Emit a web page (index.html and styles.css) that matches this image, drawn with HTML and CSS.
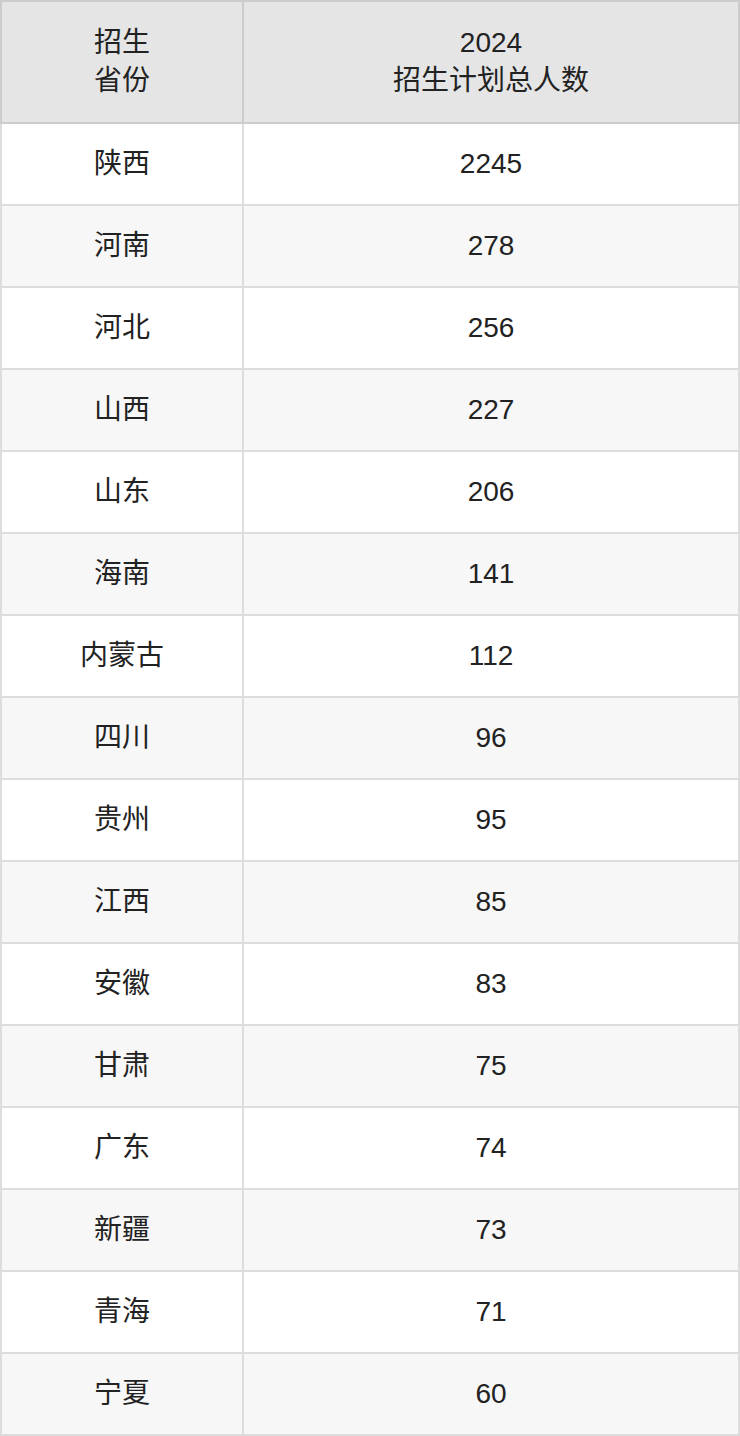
FILE: index.html
```html
<!DOCTYPE html>
<html lang="zh-CN">
<head>
<meta charset="utf-8">
<title>招生计划</title>
<link rel="stylesheet" href="styles.css">
</head>
<body>
<table class="plan">
  <colgroup><col class="c1"><col class="c2"></colgroup>
  <thead>
    <tr><th>招生<br>省份</th><th>2024<br>招生计划总人数</th></tr>
  </thead>
  <tbody>
    <tr><td>陕西</td><td>2245</td></tr>
    <tr><td>河南</td><td>278</td></tr>
    <tr><td>河北</td><td>256</td></tr>
    <tr><td>山西</td><td>227</td></tr>
    <tr><td>山东</td><td>206</td></tr>
    <tr><td>海南</td><td>141</td></tr>
    <tr><td>内蒙古</td><td>112</td></tr>
    <tr><td>四川</td><td>96</td></tr>
    <tr><td>贵州</td><td>95</td></tr>
    <tr><td>江西</td><td>85</td></tr>
    <tr><td>安徽</td><td>83</td></tr>
    <tr><td>甘肃</td><td>75</td></tr>
    <tr><td>广东</td><td>74</td></tr>
    <tr><td>新疆</td><td>73</td></tr>
    <tr><td>青海</td><td>71</td></tr>
    <tr><td>宁夏</td><td>60</td></tr>
  </tbody>
</table>
</body>
</html>
```

FILE: styles.css
```css
html, body {
  margin: 0;
  padding: 0;
  background: #fff;
}
.plan {
  width: 740px;
  border-collapse: collapse;
  table-layout: fixed;
  font-family: "Liberation Sans", Arial, "Noto Sans CJK SC", sans-serif;
  font-size: 28px;
  line-height: 38px;
  color: #222;
}
.plan .c1 { width: 242px; }
.plan th, .plan td {
  text-align: center;
  vertical-align: middle;
  padding: 0;
}
.plan th {
  height: 120px;
  font-weight: normal;
  background: #e5e5e5;
  border: 2px solid #cccccc;
}
.plan td {
  height: 80px;
  border: 2px solid #dddddd;
}
.plan tbody tr:nth-child(odd) td { background: #ffffff; }
.plan tbody tr:nth-child(even) td { background: #f7f7f7; }
```
